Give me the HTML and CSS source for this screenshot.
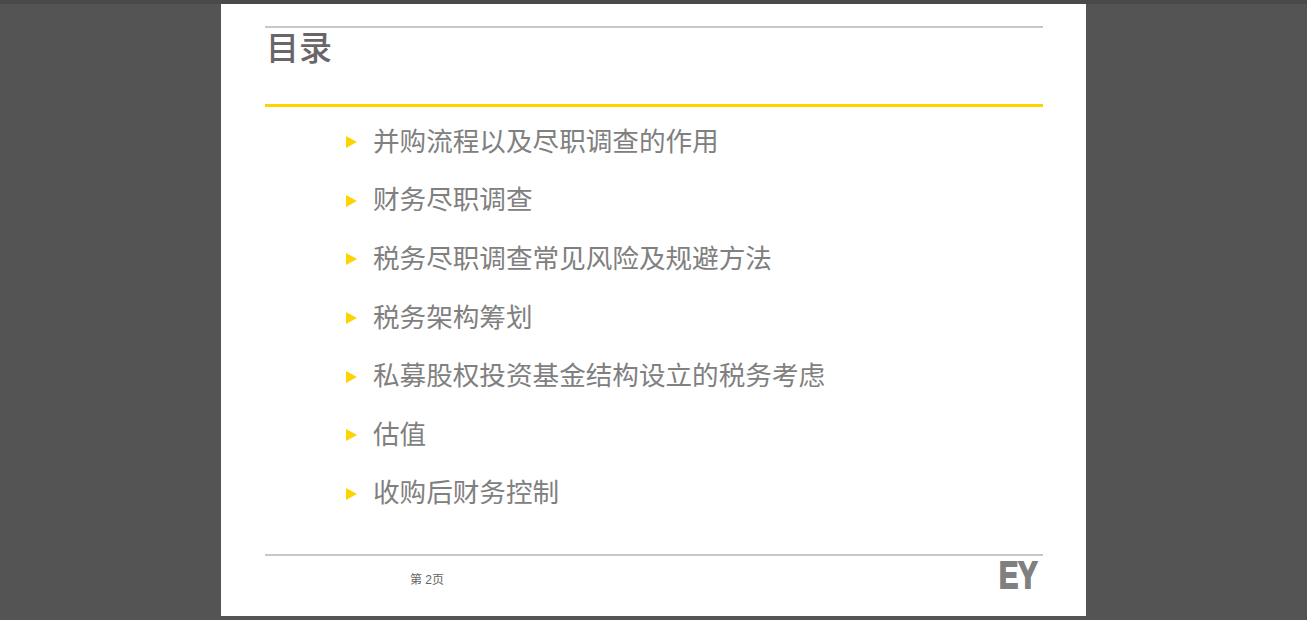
FILE: index.html
```html
<!DOCTYPE html>
<html lang="zh">
<head>
<meta charset="utf-8">
<title>目录</title>
<link rel="stylesheet" href="styles.css">
</head>
<body>
<main class="page">
  <header class="head">
    <h1 class="title">目录</h1>
  </header>
  <ul class="toc">
    <li class="item">并购流程以及尽职调查的作用</li>
    <li class="item">财务尽职调查</li>
    <li class="item">税务尽职调查常见风险及规避方法</li>
    <li class="item">税务架构筹划</li>
    <li class="item">私募股权投资基金结构设立的税务考虑</li>
    <li class="item">估值</li>
    <li class="item">收购后财务控制</li>
  </ul>
  <footer class="foot">
    <span class="pageno">第 <b class="num">2</b>页</span>
    <span class="logo">EY</span>
  </footer>
</main>
</body>
</html>
```
FILE: styles.css
```css
* { box-sizing: border-box; }
html, body { margin: 0; padding: 0; height: 620px; overflow: hidden; }
body {
  background: #545454;
  border-top: 4px solid #4a4a4a;
  font-family: "Liberation Sans", "Noto Sans CJK SC", sans-serif;
}
.page {
  width: 865px;
  height: 612px;
  margin: 0 auto;
  padding: 22px 43px 0 44px;
  background: #fff;
  display: flex;
  flex-direction: column;
}
.head {
  height: 81px;
  border-top: 2px solid #c8c8c8;
  border-bottom: 3px solid #ffd200;
}
.title {
  margin: 0;
  padding-left: 1px;
  font-size: 33px;
  line-height: 42px;
  font-weight: 500;
  color: #686668;
}
.toc {
  list-style: none;
  margin: 0;
  padding: 3px 0 0 81px;
  height: 447px;
  display: flex;
  flex-direction: column;
}
.item {
  display: flex;
  align-items: center;
  height: 58.6px;
  font-size: 26.6px;
  color: #808080;
}
.item::before {
  content: "";
  width: 0;
  height: 0;
  margin: 6px 16px 0 0;
  border-left: 11px solid #ffd200;
  border-top: 6.5px solid transparent;
  border-bottom: 6.5px solid transparent;
}
.foot {
  border-top: 2px solid #c8c8c8;
  height: 60px;
  display: flex;
  justify-content: space-between;
  padding: 0 5px 0 145px;
}
.pageno {
  margin-top: 15px;
  font-size: 12px;
  line-height: 18px;
  color: #646464;
}
.num { font-weight: 400; }
.logo {
  margin-top: 1px;
  width: 39px;
  font-size: 36px;
  line-height: 38px;
  font-weight: 700;
  color: #808080;
  -webkit-text-stroke: 1.8px #808080;
  transform: scaleX(0.8);
  transform-origin: 0 0;
  white-space: nowrap;
}
```
